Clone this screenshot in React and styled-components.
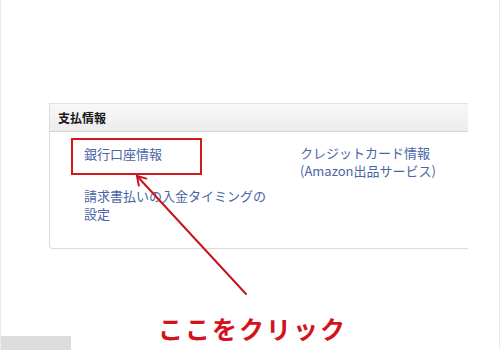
import styled, { createGlobalStyle } from 'styled-components';

const GlobalStyle = createGlobalStyle`
    html, body {
        margin: 0;
        padding: 0;
        background: #ffffff;
    }
    body {
        font-family: "Noto Sans CJK JP", "Liberation Sans", sans-serif;
    }
`;

const App = () => {
    return (
        <Page>
            <GlobalStyle />
            <Panel>
                <PanelHeader>支払情報</PanelHeader>
                <PanelBody>
                    <LinkCell $marked>
                        <PayLink>銀行口座情報</PayLink>
                    </LinkCell>
                    <LinkCell>
                        <PayLink>
                            クレジットカード情報
                            <br />
                            (Amazon出品サービス)
                        </PayLink>
                    </LinkCell>
                    <LinkCell $row>
                        <PayLink>
                            請求書払いの入金タイミングの
                            <br />
                            設定
                        </PayLink>
                    </LinkCell>
                </PanelBody>
            </Panel>
            <Callout>ここをクリック</Callout>
            <Arrow width="500" height="350" viewBox="0 0 500 350">
                <line x1="245" y1="294" x2="136" y2="176" />
                <polyline points="145.4,178.6 136,176 137.8,185.6" />
            </Arrow>
            <BottomStrip />
        </Page>
    );
};

export default App;

const Page = styled.div`
    position: relative;
    width: 500px;
    height: 350px;
    box-sizing: border-box;
    padding: 103px 0 0 48px;
    border-left: solid 1px #ececec;
    border-right: solid 1px #ececec;
    overflow: hidden;
`;

const Panel = styled.div`
    width: 418px;
    border-left: solid 1px #dcdcdc;
    border-bottom: solid 1px #dedede;
    border-bottom-left-radius: 4px;
    box-shadow: 0 1px 1px rgba(0, 0, 0, 0.03);
`;

const PanelHeader = styled.div`
    height: 27px;
    display: flex;
    align-items: center;
    padding-left: 8px;
    font-size: 12px;
    font-weight: bold;
    color: #1a1a1a;
    background: linear-gradient(#f8f8f8, #ececec);
    border-top: solid 1px #e2e2e2;
    border-bottom: solid 1px #d6d6d6;
`;

const PanelBody = styled.div`
    display: grid;
    grid-template-columns: 229px 1fr;
    row-gap: 3px;
    padding: 6px 0 25px 21px;
`;

const LinkCell = styled.div`
    box-sizing: border-box;
    width: ${(p) => (p.$marked ? '131px' : 'auto')};
    height: ${(p) => (p.$marked ? '37px' : 'auto')};
    padding: ${(p) => (p.$marked ? '5px 0 0 11px' : '6px 0 0 0')};
    border: ${(p) => (p.$marked ? 'solid 2px #d4161e' : 'none')};
    ${(p) => p.$row && 'padding: 4px 0 0 13px;'}
`;

const PayLink = styled.a`
    display: block;
    font-size: 13px;
    line-height: 18px;
    color: #4a64a6;
    text-decoration: none;
    white-space: nowrap;
`;

const Callout = styled.div`
    margin: 64px 0 0 109px;
    font-size: 25px;
    line-height: 30px;
    font-weight: bold;
    letter-spacing: 2px;
    color: #d3131c;
`;

const Arrow = styled.svg`
    position: absolute;
    left: 0;
    top: 0;
    pointer-events: none;

    line,
    polyline {
        fill: none;
        stroke: #c8141c;
        stroke-width: 2;
        stroke-linecap: round;
    }
`;

const BottomStrip = styled.div`
    position: absolute;
    left: 0;
    bottom: 0;
    width: 70px;
    height: 14px;
    background: #dcdcdc;
`;
